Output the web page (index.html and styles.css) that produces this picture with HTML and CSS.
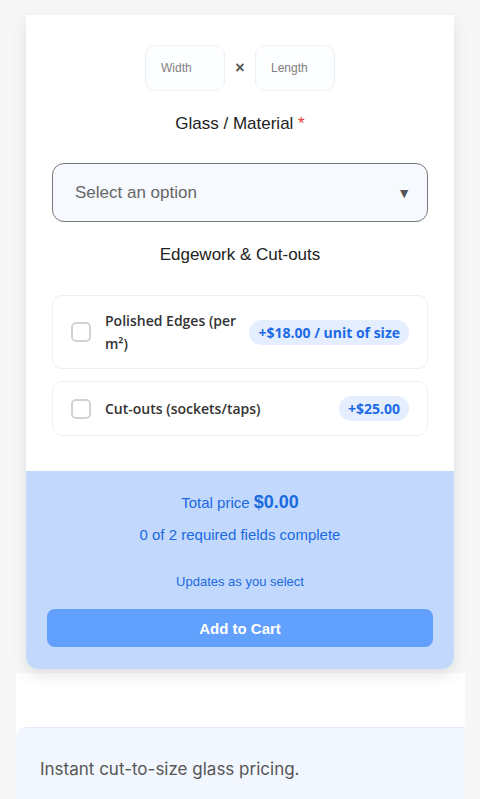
FILE: index.html
```html
<!DOCTYPE html>
<html lang="en">
<head>
    <meta charset="UTF-8">
    <meta name="viewport" content="width=device-width, initial-scale=1.0">
    <title>Cut-to-size Glass</title>
    <link rel="stylesheet" href="styles.css">
</head>
<body>
    <main class="page">
        <section class="card">
            <div class="card-body">
                <div class="dims">
                    <input class="dim-input" type="text" placeholder="Width">
                    <span class="dim-x">&times;</span>
                    <input class="dim-input" type="text" placeholder="Length">
                </div>

                <h3 class="field-label">Glass / Material <span class="req">*</span></h3>
                <div class="select-box">
                    <span>Select an option</span>
                    <span class="select-arrow">&#9660;</span>
                </div>

                <h3 class="field-label extras-label">Edgework &amp; Cut-outs</h3>
                <div class="options">
                    <label class="option">
                        <span class="check"></span>
                        <span class="option-name">Polished Edges (per m&sup2;)</span>
                        <span class="badge">+$18.00 / unit of size</span>
                    </label>
                    <label class="option">
                        <span class="check"></span>
                        <span class="option-name">Cut-outs (sockets/taps)</span>
                        <span class="badge">+$25.00</span>
                    </label>
                </div>
            </div>

            <div class="summary">
                <p class="total">Total price <strong>$0.00</strong></p>
                <p class="progress">0 of 2 required fields complete</p>
                <p class="hint">Updates as you select</p>
                <button class="cart-btn">Add to Cart</button>
            </div>
        </section>

        <section class="info">
            <div class="info-box">
                <p>Instant cut-to-size glass pricing.</p>
            </div>
        </section>
    </main>
</body>
</html>
```

FILE: styles.css
```css
body {
    margin: 0;
    background-color: #f7f7f7;
    font-family: "Liberation Sans", Arial, sans-serif;
    color: #222;
}

.page {
    padding-top: 15px;
}

.card {
    margin: 0 26px;
    background: white;
    border-radius: 0 0 12px 12px;
    box-shadow: 0 6px 16px rgba(0, 0, 0, 0.1);
    overflow: hidden;
    position: relative;
    z-index: 1;
}

.card-body {
    padding: 30px 26px 35px;
}

.dims {
    display: flex;
    justify-content: center;
    align-items: center;
    gap: 10px;
}

.dim-input {
    width: 80px;
    height: 46px;
    box-sizing: border-box;
    border: 1px solid #eef1f4;
    border-radius: 10px;
    background: #fdfeff;
    padding: 0 15px;
    font-family: "Liberation Sans", Arial, sans-serif;
    font-size: 12px;
    outline: none;
}

.dim-input::placeholder {
    color: #808080;
}

.dim-x {
    color: #555;
    font-size: 16px;
    font-weight: bold;
    width: 10px;
    text-align: center;
}

.field-label {
    margin: 23px 0 29px;
    text-align: center;
    font-size: 17px;
    font-weight: normal;
    line-height: 20px;
    color: #222;
}

.req {
    color: #e53935;
}

.select-box {
    display: flex;
    justify-content: space-between;
    align-items: center;
    height: 59px;
    box-sizing: border-box;
    padding: 0 16px 0 22px;
    border: 1px solid #777;
    border-radius: 12px;
    background: #f6f9fe;
    font-size: 17px;
    color: #666;
}

.select-arrow {
    font-size: 14px;
    color: #555;
}

.extras-label {
    margin: 23px 0 30px;
}

.options {
    display: flex;
    flex-direction: column;
    gap: 12px;
}

.option {
    display: flex;
    align-items: center;
    min-height: 55px;
    box-sizing: border-box;
    padding: 13px 18px;
    border: 1px solid #eef0f3;
    border-radius: 10px;
    background: white;
    cursor: pointer;
}

.check {
    flex: none;
    width: 20px;
    height: 20px;
    box-sizing: border-box;
    border: 2px solid #cfd3d8;
    border-radius: 5px;
    margin-right: 14px;
}

.option-name {
    flex: 1;
    font-family: "Open Sans", sans-serif;
    font-size: 14px;
    font-weight: 600;
    line-height: 23px;
    color: #333;
}

.badge {
    flex: none;
    margin-left: 12px;
    padding: 0 9px;
    line-height: 25px;
    border-radius: 13px;
    background: #e4eeff;
    color: #1d6ae5;
    font-family: "Open Sans", sans-serif;
    font-size: 14px;
    font-weight: 700;
}

.summary {
    background: #c2d9fd;
    padding: 21px 21px 22px;
    text-align: center;
    color: #1c6ae0;
}

.summary p {
    margin: 0;
}

.total {
    font-size: 15px;
    line-height: 20px;
}

.total strong {
    font-size: 18px;
}

.summary .progress {
    margin-top: 12px;
    font-size: 15px;
    line-height: 20px;
}

.summary .hint {
    margin-top: 29px;
    font-size: 13px;
    line-height: 16px;
}

.cart-btn {
    display: block;
    width: 100%;
    height: 38px;
    margin-top: 19px;
    border: none;
    border-radius: 8px;
    background: #61a0fd;
    color: white;
    font-family: "Liberation Sans", Arial, sans-serif;
    font-size: 15px;
    font-weight: bold;
    cursor: pointer;
}

.info {
    margin: 4px 15px 0 16px;
    padding-top: 54px;
    background: white;
}

.info-box {
    background: #f2f7ff;
    border-top: 1px solid #e3ecf8;
    border-radius: 10px 0 0 0;
    padding: 31px 24px 40px;
}

.info-box p {
    margin: 0;
    font-family: Inter, sans-serif;
    font-size: 17px;
    color: #555;
}
```
